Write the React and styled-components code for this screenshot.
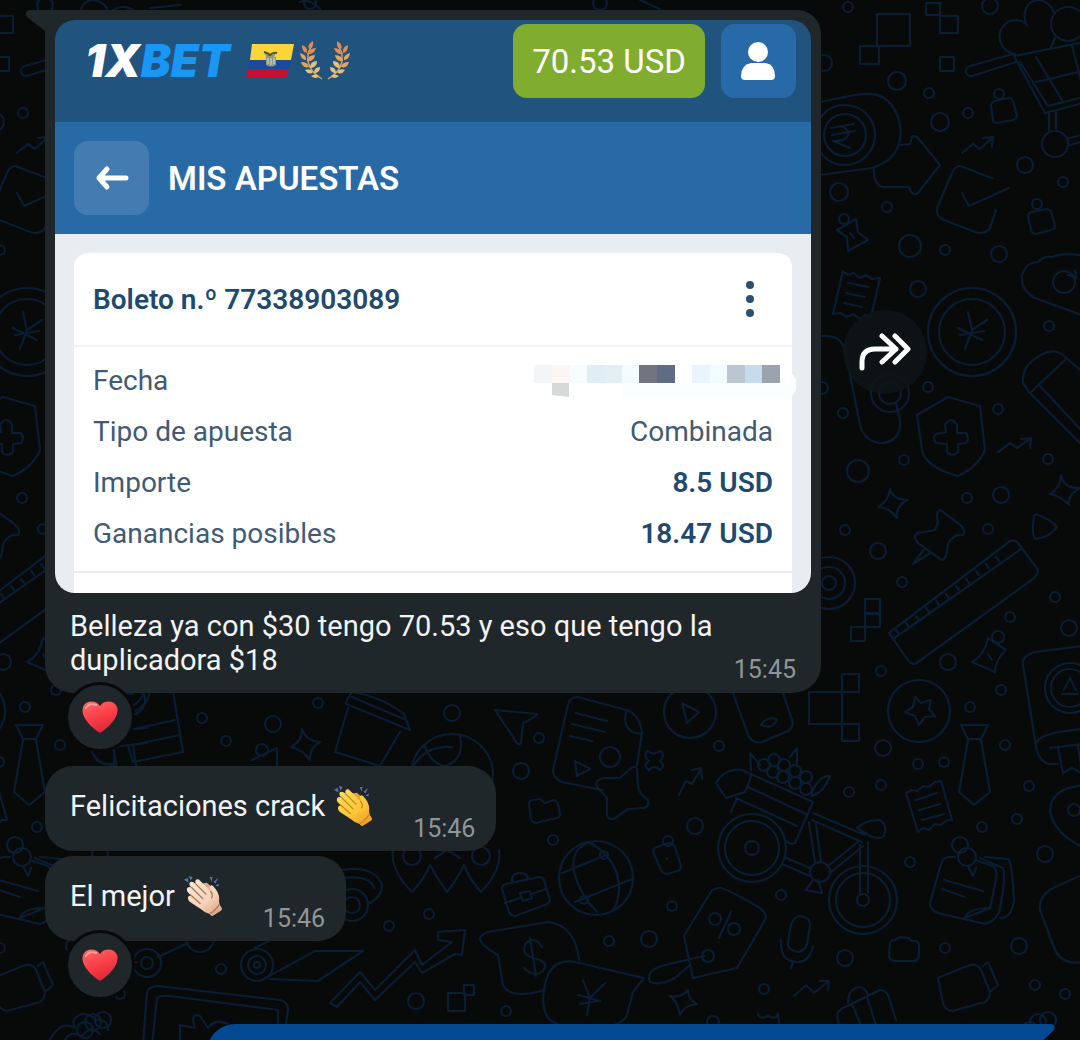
import styled, { createGlobalStyle, css } from "styled-components";

const details = [
  { label: "Fecha", hidden: true },
  { label: "Tipo de apuesta", value: "Combinada" },
  { label: "Importe", value: "8.5 USD", strong: true },
  { label: "Ganancias posibles", value: "18.47 USD", strong: true },
];

// x, width, colour
const mosaic = [
  [0, 18, "#f4f5f6"],
  [18, 18, "#fbf6f1"],
  [36, 17, "#f5fdfe"],
  [53, 18, "#e1edf4"],
  [71, 17, "#e4eff5"],
  [88, 17, "#f4fbfe"],
  [105, 18, "#71757f"],
  [123, 18, "#5f6c84"],
  [158, 18, "#e9f5fd"],
  [176, 17, "#f2fbfd"],
  [193, 18, "#bac7d0"],
  [211, 17, "#c5dcec"],
  [228, 18, "#9ba4ad"],
];

// x, y, radius
const bubbles = [
  [848, 7, 5], [990, 6, 8], [897, 81, 9], [929, 93, 5], [968, 113, 5], [940, 122, 9],
  [1025, 165, 8], [1063, 182, 5], [839, 192, 9], [887, 207, 5], [910, 246, 11], [945, 250, 5],
  [999, 254, 8], [918, 289, 8], [1049, 326, 5], [824, 63, 8], [928, 387, 5], [843, 413, 5],
  [998, 409, 5], [904, 460, 5], [858, 471, 11], [1048, 459, 5], [967, 498, 5], [1001, 495, 8],
  [845, 530, 5], [878, 551, 8], [988, 529, 5], [902, 582, 5], [1055, 597, 5], [1010, 617, 5],
  [1069, 628, 8], [948, 662, 8], [881, 671, 5], [1001, 690, 5], [822, 388, 6], [539, 738, 5],
  [521, 771, 8], [553, 840, 5], [719, 746, 5], [695, 826, 8], [672, 906, 5], [609, 941, 5],
  [649, 939, 8], [764, 989, 5], [506, 1011, 5], [781, 895, 5], [883, 748, 8], [918, 764, 5],
  [944, 762, 5], [970, 707, 5], [1005, 745, 5], [881, 785, 5], [849, 792, 5], [1029, 786, 5],
  [1017, 819, 5], [982, 827, 5], [910, 862, 5], [1045, 854, 8], [1019, 946, 8], [945, 948, 5],
  [845, 958, 8], [1035, 985, 5], [1065, 994, 5], [1074, 810, 6], [202, 718, 5], [273, 724, 8],
  [226, 741, 5], [318, 703, 5], [452, 713, 8], [389, 926, 5], [429, 914, 5], [221, 969, 5],
  [416, 1001, 8], [845, 135, 30], [845, 135, 21], [972, 332, 44], [972, 332, 33],
  [1068, 24, 17], [1055, 144, 13], [999, 94, 5], [1037, 204, 5], [844, 219, 5], [1064, 282, 11],
  [890, 393, 19], [890, 393, 11], [829, 583, 26], [829, 583, 16], [829, 583, 7], [998, 637, 6],
  [919, 711, 31], [1070, 688, 25], [1070, 688, 19], [610, 757, 10], [690, 712, 26],
  [596, 878, 37], [604, 855, 4], [584, 900, 4], [715, 919, 6], [734, 929, 6], [708, 956, 6],
  [752, 848, 34], [752, 848, 27], [752, 848, 7], [863, 900, 34], [863, 900, 27], [863, 900, 6],
  [820, 872, 10], [960, 845, 8], [967, 857, 9], [764, 765, 6], [774, 760, 6], [784, 765, 6],
  [773, 772, 6], [783, 777, 6], [795, 771, 6], [795, 783, 6], [806, 777, 6], [806, 789, 6],
  [352, 905, 16], [352, 905, 8], [257, 965, 16], [257, 965, 9], [257, 965, 3], [147, 963, 14],
  [147, 963, 6], [200, 938, 14], [412, 856, 9], [481, 856, 9], [452, 775, 41], [262, 750, 6],
  [668, 841, 5], [1038, 1022, 8], [1048, 1020, 8], [1030, 1030, 8], [45, 5, 8], [130, 700, 15],
  [310, 3, 6], [600, 3, 7], [713, 1022, 6],
];

const squares = [
  [877, 14, 33, 32], [860, 46, 19, 18], [926, 3, 14, 12], [940, 16, 18, 17], [940, 57, 14, 14],
  [865, 599, 15, 15], [865, 613, 15, 14], [851, 627, 14, 14], [842, 674, 17, 18],
  [809, 692, 33, 32], [842, 724, 17, 17], [448, 993, 17, 18], [464, 985, 10, 10],
];

const doodles = [
  // heart and shopping cart
  "M1015 54C1000 52 996 35 1003 27C1010 16 1025 20 1027 26C1020 10 1030 0 1038 0C1048 1 1053 8 1054 13M1055 38L1051 48",
  "M1013 54L970 66A5 5 0 0 0 972 76L1016 62M1014 56L1045 113L1095 100M1020 62L1048 106L1095 94M1014 56L1085 42M1036 57L1062 100M1036 82L1095 68M1072 46L1082 84",
  "M1049 113V131M1056 112V131M1067 139L1090 132M1067 146L1090 139",
  // padlocks
  "M991 106Q991 102 995 101L1008 98Q1012 98 1013 101L1017 116Q1016 119 1013 120L997 123Q993 123 993 120Z",
  "M1028 217Q1028 213 1032 212L1047 209Q1050 209 1051 212L1055 226Q1055 229 1051 230L1036 234Q1032 234 1031 230Z",
  // banknote, rupee, arrow
  "M820 102C850 96 870 90 882 97C900 107 902 130 900 140C896 160 880 165 872 168L820 175",
  "M831 128L854 124M832 135L855 131M840 126C854 130 850 142 833 141L850 148",
  "M900 145L910 144L912 137Q915 135 918 138L940 165L918 193Q912 197 909 187L882 187Q873 184 874 167",
  "M962 153L973 144L980 149L993 137M983 138L993 137L992 147",
  "M992 178L960 166Q955 166 952 173L937 208Q936 215 942 219L975 232Q985 235 990 228L996 210M962 193L969 206L1009 188",
  "M837 230L856 219L858 232L868 240L848 251L847 237ZM850 233L854 238",
  "M843 271L848 275L854 273L860 278L866 275L872 279L880 278L871 317L865 315L860 319L853 314L847 317L840 313L833 314ZM848 283L868 287M846 293L865 297M844 303L862 307",
  "M968 312L972 330L987 320M972 330L965 349M958 328L982 340M960 335L984 331",
  "M1095 320L1035 298Q1020 290 1022 275Q1026 262 1038 262Q1045 255 1052 257Q1065 252 1085 256M1068 275L1076 278L1075 270",
  "M822 336Q840 334 845 350L860 425Q865 443 883 443Q902 440 900 420L896 403",
  // shield
  "M948 397Q965 402 980 406L985 450Q978 467 958 476Q925 467 922 450L917 415Z",
  "M945 425Q951 415 957 425V433L966 433Q970 439 966 443L958 444V452Q952 458 947 452V444L936 443Q932 438 936 434L946 432Z",
  "M998 452L1010 443L1017 448L1031 438M1021 439L1031 438L1030 448",
  "M1023 383Q1022 370 1030 363Q1050 345 1063 355L1095 383M1023 383L1030 393L1095 458M1030 393L1065 360M1040 386L1095 445",
  "M890 489Q893 500 908 500Q895 506 897 518Q890 508 878 507Q889 501 890 489Z",
  "M1061 475Q1064 489 1080 488Q1067 495 1069 505Q1061 496 1050 494Q1060 489 1061 475Z",
  "M940 510Q935 512 938 522L935 530L918 533Q912 536 918 543L940 559Q945 562 947 552L948 544Q953 534 963 535Q967 530 958 523ZM924 549L913 564L930 553",
  "M1036 514Q1052 520 1057 527Q1050 537 1036 539Q1031 537 1034 516Z",
  // ruler
  "M889 633L1010 541Q1014 539 1018 543L1038 570Q1038 575 1033 579L915 664Q912 665 908 660ZM893 639L1021 549",
  "M899 634L896 630M909 627L906 623M919 620L916 616M929 612L926 608M939 605L936 601M949 598L946 594M959 590L956 586M969 583L966 579M979 575L976 571M989 568L986 564M999 561L996 557",
  "M988 638L1006 650Q995 660 995 672L972 662Q985 655 988 638ZM988 654L992 660",
  "M915 697L921 703L931 700L929 709L935 716L925 717L919 725L915 716L905 712L913 707Z",
  // passport
  "M1092 645L1035 652Q1022 655 1023 665L1035 740Q1037 762 1050 764L1058 764M1037 742Q1040 732 1092 728M1050 748L1092 743M1058 747L1063 773L1072 768L1082 773L1078 745",
  "M1064 690L1070 678L1076 690M1062 694H1078",
  // plane, document, star
  "M495 710L537 714Q535 718 523 723L521 743Q518 747 513 737Z",
  "M602 790L562 782Q553 778 553 770L568 705Q570 697 577 697L627 710Q640 715 642 733L637 765M627 710Q622 725 632 732L641 734",
  "M576 713L607 721M572 724L605 732M570 736L592 741M575 761L590 769L577 776Z",
  "M637 768L638 787Q640 795 648 800Q650 808 642 808L628 809L614 819Q608 820 607 815V798L597 787Q594 780 604 778L620 778L630 769Q635 765 637 768Z",
  "M682 703L699 712L687 723Z",
  "M733 693L748 735Q752 744 762 742L788 731Q794 728 792 720L783 693M761 725Q766 716 777 719Q774 730 761 725Z",
  "M648 751Q654 756 660 751Q666 755 660 761Q666 766 660 770Q654 764 649 770Q642 766 649 761Q642 755 648 751Z",
  "M679 795L686 781L692 784L701 769M692 770L701 768L702 779",
  "M529 804Q529 800 533 800L540 799L545 803L554 800Q558 800 560 814Q560 818 556 818L536 823Q532 823 531 819Z",
  "M562 873L604 856M575 902L632 879M589 842Q570 850 574 872Q580 895 597 912M589 842Q620 860 619 890Q618 905 612 911",
  "M653 852Q653 848 657 847L669 843Q673 843 675 847L681 866Q681 870 677 871L667 874Q663 874 661 870ZM667 858V859",
  "M502 889Q502 885 506 884L539 877Q543 877 544 880L550 900Q549 904 545 905L515 916Q511 916 509 912ZM505 903L520 898M532 894L546 889M520 893L530 891L532 898L523 901ZM512 882Q511 873 520 873Q527 873 528 878",
  "M545 990Q510 1000 503 985L498 955Q480 945 480 938Q482 932 500 930L548 922Q575 925 579 960",
  "M542 947Q535 935 526 943Q520 955 534 958Q550 962 543 971Q534 978 524 968M530 938L536 976",
  "M644 978L575 962Q550 958 545 985Q540 1005 548 1018Q560 1030 585 1026Q620 1030 627 1015L633 992Z",
  "M583 980L590 998L605 983M590 998L587 1015M578 995L600 1001M580 1004L598 1001",
  "M718 888Q722 886 760 908Q768 914 765 920L737 968L693 978L684 936L712 890ZM731 912L719 938M704 956L665 965Q645 970 650 982Q660 986 675 978L690 965",
  "M688 990Q688 1000 697 1004Q684 1005 680 1015Q678 1002 670 996Q682 998 688 990Z",
  // bicycle
  "M786 858L810 868M784 865L810 876M813 813L865 835M812 820L862 842M809 822L815 862M816 824L821 862M828 866L858 842M830 873L863 846M860 845V893M868 842V893",
  "M857 828Q865 820 880 820Q888 825 884 836Q880 840 870 836ZM813 880L806 890L822 893L818 880",
  "M716 783Q725 768 742 770L813 802L795 843Q790 845 785 840M716 783L726 798L745 792L752 774M748 787L806 814M736 798L797 826M737 798L731 812M751 770L750 753L760 765M790 757L797 748V764M812 792Q820 775 830 776Q824 792 812 796Z",
  "M961 725H988L981 739H968ZM968 740L959 792L974 805L990 792L981 740",
  "M906 793L912 790L917 791L923 786L929 787L935 782L941 781L952 820L947 820L941 825L935 824L929 830L923 828L918 832ZM916 800L937 793M919 810L940 804M922 820L944 814",
  "M1092 785Q1050 785 1050 812Q1055 835 1085 848",
  "M955 857H948Q943 858 941 864L930 903Q930 910 938 913L985 924Q998 920 1000 908M975 860L993 866Q998 870 996 880L990 908L965 918Q968 908 990 908M980 858L1003 868Q1006 880 1000 908M985 857L1008 859Q1012 862 1014 900Q1012 918 1000 918",
  "M944 880L983 891M942 889L965 897M968 866L973 876L976 868",
  "M1092 870L1060 885Q1038 893 1040 910L1055 950Q1062 965 1082 962",
  "M938 978L970 965Q978 963 981 970L990 992Q990 998 985 1002L952 1011Q945 1010 943 1003ZM983 966L988 962L998 985L990 992",
  "M791 925Q794 916 801 916Q811 918 810 926L807 944Q804 952 797 952Q787 950 788 942ZM781 940Q780 962 797 962Q810 962 813 946M793 962L791 968",
  "M890 944Q890 940 895 940L900 937L908 938L912 941Q919 940 919 946V955Q918 961 913 961H895Q889 960 889 955Z",
  "M794 996L806 985L814 993L829 981M820 981H829L828 990",
  "M840 1030L837 1015Q838 1010 845 1007L880 990Q887 990 889 998L896 1020M852 1004L862 1028M867 997L877 1028M848 1003Q848 990 858 987Q866 987 868 996",
  // lower left
  "M348 708L335 752L380 766L400 732M347 700L352 692Q380 696 404 714L410 730L346 704ZM352 697L406 720",
  "M424 745Q432 765 445 766Q465 760 460 736M412 768Q425 745 452 747",
  "M173 692L183 752L133 762L128 745M130 730L175 720M132 745L180 735M92 752Q98 765 114 765V745",
  "M302 729Q306 741 320 742Q309 748 310 760Q303 750 291 747Q302 742 302 729ZM252 760L277 748V766",
  "M393 850Q390 870 412 892Q425 878 430 865Q438 880 447 892Q458 878 464 865Q470 880 481 892Q502 870 499 850M435 858L447 850L460 858",
  "M342 870Q375 865 382 885Q383 895 370 903M343 878Q370 875 374 888",
  "M270 979L318 981L363 951H315L262 980M255 948L275 938M158 957L188 943",
  "M330 1003L360 972L375 990L415 950L422 965L452 942L438 940V932L465 930L462 955L455 954L422 973L415 962L375 1000L360 982L337 1007Z",
  "M143 1045L147 992Q150 986 158 986L280 1000Q288 1002 288 1010L285 1030M152 1045L157 998Q160 995 170 996L278 1010V1030M180 1045V1025L195 1028Q190 1012 200 1016L208 1028Q215 1018 228 1024",
  "M50 1040Q60 1020 75 1028Q70 1018 82 1014Q92 1014 95 1020Q108 1018 108 1030M65 1040Q70 1030 82 1036Q90 1025 100 1034",
  "M150 8L180 5M300 2Q310 -2 320 9M640 0L660 9",
  "M758 1014Q760 1020 768 1016Q776 1020 778 1014L780 1030",
];

const Doodles = () => (
  <>
    {bubbles.map(([x, y, r], i) => (
      <circle key={i} cx={x} cy={y} r={r} />
    ))}
    {squares.map(([x, y, w, h], i) => (
      <rect key={i} x={x} y={y} width={w} height={h} />
    ))}
    {doodles.map((d, i) => (
      <path key={i} d={d} />
    ))}
  </>
);

// the wallpaper repeats every 945px
const Wallpaper = () => (
  <WallpaperSvg
    viewBox="0 0 1080 1040"
    preserveAspectRatio="xMinYMin slice"
    aria-hidden="true"
  >
    <g fill="none" stroke="#0a1d32" strokeWidth="2.2" strokeLinejoin="round" strokeLinecap="round">
      <Doodles />
      <g transform="translate(-945 0)">
        <Doodles />
      </g>
    </g>
  </WallpaperSvg>
);

const Flag = () => (
  <svg width="48" height="34" viewBox="0 0 48 34" role="img" aria-label="Ecuador">
    <path d="M6 0H48L45 16H4Z" fill="#fbd536" />
    <path d="M4 16H45L43 25H2Z" fill="#1b4a9c" />
    <path d="M2 25H43L40 34H0Z" fill="#c8102e" />
    <path d="M19 9Q24 12 30 9L28 13H30V21Q25 24 20 21V13Z" fill="#8f9a86" />
    <path d="M18 8Q22 9 24 11Q27 8 31 9" fill="none" stroke="#4f5238" strokeWidth="2" />
    <path d="M22 14V20M25 14V21M28 14V20" stroke="#d8ddd0" strokeWidth="1" />
  </svg>
);

const Branch = () => (
  <>
    <path d="M11 6C6 14 5 28 22 38" fill="none" stroke="#d9a66a" strokeWidth="1.4" />
    <path d="M13 0Q7 3 9 8Q14 7 13 0ZM2 4Q2 11 7 12Q8 6 2 4ZM16 7Q9 7 7 13Q14 14 16 7Z" fill="#e8894a" />
    <path d="M0 12Q1 19 6 19Q7 14 0 12ZM15 14Q8 14 7 20Q14 21 15 14ZM1 21Q3 28 9 26Q8 21 1 21Z" fill="#e6a55a" />
    <path d="M17 20Q10 20 10 27Q17 27 17 20ZM5 29Q9 35 13 31Q11 27 5 29ZM20 26Q14 26 14 32Q20 32 20 26ZM11 35Q16 39 19 35Q16 32 11 35Z" fill="#e9c07a" />
  </>
);

const Laurel = () => (
  <svg width="50" height="40" viewBox="0 0 50 40" aria-hidden="true">
    <Branch />
    <g transform="translate(50 0) scale(-1 1)">
      <Branch />
    </g>
  </svg>
);

const UserIcon = () => (
  <svg width="35" height="40" viewBox="0 0 35 40" fill="#fff" aria-hidden="true">
    <circle cx="17" cy="11" r="10" />
    <path d="M10 22H25Q34 24 34 35Q34 39 30 39H4Q0 39 0 35Q0 24 10 22Z" />
  </svg>
);

const BackIcon = () => (
  <svg width="34" height="26" viewBox="0 0 34 26" aria-hidden="true">
    <path d="M31 13H4M12 4L4 13L12 22" fill="none" stroke="#fff" strokeWidth="5" strokeLinecap="round" strokeLinejoin="round" />
  </svg>
);

const DotsIcon = () => (
  <svg width="10" height="36" viewBox="0 0 10 36" fill="#2c5071" aria-hidden="true">
    <circle cx="5" cy="4" r="4" />
    <circle cx="5" cy="18" r="4" />
    <circle cx="5" cy="32" r="4" />
  </svg>
);

const ForwardIcon = () => (
  <svg width="52" height="38" viewBox="0 0 52 38" aria-hidden="true">
    <path
      d="M3 35V29Q3 16 16 16H37M23 3L37 16L23 29M36 3L49 16L36 29"
      fill="none"
      stroke="#fff"
      strokeWidth="5"
      strokeLinecap="round"
      strokeLinejoin="round"
    />
  </svg>
);

const Heart = () => (
  <svg width="36" height="33" viewBox="0 0 36 33" role="img" aria-label="❤">
    <defs>
      <linearGradient id="heart" x1="0" y1="0" x2="0.4" y2="1">
        <stop offset="0" stopColor="#ff6a68" />
        <stop offset="0.55" stopColor="#fb3f48" />
        <stop offset="1" stopColor="#e0283a" />
      </linearGradient>
    </defs>
    <path d="M18 5C14-1 4-1 1 6C-2 16 9 26 18 32C27 26 38 16 35 6C32-1 22-1 18 5Z" fill="url(#heart)" />
    <path d="M4 7Q8 1 14 4" fill="none" stroke="#ff9d97" strokeWidth="2" strokeLinecap="round" />
  </svg>
);

const Clap = ({ id, light, base, shade, line }) => (
  <ClapSvg viewBox="0 0 40 42" role="img" aria-label="👏">
    <defs>
      <linearGradient id={id} gradientUnits="userSpaceOnUse" x1="8" y1="8" x2="32" y2="40">
        <stop offset="0" stopColor={light} />
        <stop offset="0.6" stopColor={base} />
        <stop offset="1" stopColor={shade} />
      </linearGradient>
    </defs>
    <path d="M0 4L5 7L4 2ZM5 0L7 5L9 1ZM27 1L29 6L30 1ZM31 6L36 2L33 8ZM33 10L37 8L36 11Z" fill="#5873ad" />
    <path d="M19 8L24 7L31 13L28 18L20 11Z" fill={shade} />
    <path
      d="M12 5Q14 2 17 5L28 16L27 12Q28 8 31 11Q37 17 37 24Q36 29 40 34Q40 36 38 37L30 42Q28 42 27 40Q22 39 18 35L6 27Q3 24 5 21Q7 20 9 22L4 17Q2 14 4 12Q6 11 9 13L6 10Q5 6 8 6Q10 6 12 8Z"
      fill={`url(#${id})`}
    />
    <path
      d="M12 8L23 19M8 12L20 24M7 20L17 29M28 16Q31 20 29 23M37 30Q32 37 28 39"
      fill="none"
      stroke={line}
      strokeWidth="1.4"
      strokeLinecap="round"
    />
  </ClapSvg>
);

const Redacted = () => (
  <RedactedSvg width="262" height="36" viewBox="0 0 262 36" role="img" aria-label="Fecha oculta">
    <path d="M88 18H257V7L262 14V25L257 33H88Z" fill="#fbfefe" />
    {mosaic.map(([x, w, fill]) => (
      <rect key={x} x={x} y="0" width={w} height="18" fill={fill} />
    ))}
    <path d="M18 18H35V32L18 30Z" fill="#d5dad9" />
  </RedactedSvg>
);

const BetSlip = () => (
  <Slip>
    <Topbar>
      <Logo>
        1X<span>BET</span>
      </Logo>
      <Badges>
        <Flag />
        <Laurel />
      </Badges>
      <Balance type="button">70.53 USD</Balance>
      <SquareButton type="button" aria-label="Perfil" $color="#286aa8">
        <UserIcon />
      </SquareButton>
    </Topbar>
    <TitleBar>
      <SquareButton type="button" aria-label="Volver" $color="#437cb0">
        <BackIcon />
      </SquareButton>
      <h1>MIS APUESTAS</h1>
    </TitleBar>
    <SlipBody>
      <Card>
        <CardHeader>
          <h2>Boleto n.º 77338903089</h2>
          <MenuButton type="button" aria-label="Opciones">
            <DotsIcon />
          </MenuButton>
        </CardHeader>
        <Details>
          {details.map(({ label, value, strong, hidden }) => (
            <DetailRow key={label}>
              <dt>{label}</dt>
              <DetailValue $strong={strong}>{hidden ? <Redacted /> : value}</DetailValue>
            </DetailRow>
          ))}
        </Details>
        <NextSection />
      </Card>
    </SlipBody>
  </Slip>
);

const App = () => (
  <>
    <GlobalStyle />
    <Chat>
      <Wallpaper />
      <Messages>
        <MessageRow>
          <PhotoBubble>
            <Tail width="24" height="24" viewBox="0 0 24 24" aria-hidden="true">
              <path d="M4 0H24V24L2 7Q-1 2 4 0Z" fill="#20272a" />
            </Tail>
            <BetSlip />
            <Caption>
              <p>Belleza ya con $30 tengo 70.53 y eso que tengo la duplicadora $18</p>
              <Time>15:45</Time>
            </Caption>
          </PhotoBubble>
          <ForwardButton type="button" aria-label="Reenviar">
            <ForwardIcon />
          </ForwardButton>
        </MessageRow>
        <Reaction type="button">
          <Heart />
        </Reaction>
        <TextBubble>
          <p>
            Felicitaciones crack{" "}
            <Clap id="clap-yellow" light="#ffdc5c" base="#fdc637" shade="#ef9f2c" line="#c98a1b" />
          </p>
          <Time>15:46</Time>
        </TextBubble>
        <TextBubble>
          <p>
            El mejor{" "}
            <Clap id="clap-light" light="#fbe3cf" base="#f7d3bb" shade="#e0a98d" line="#a9785f" />
          </p>
          <Time>15:46</Time>
        </TextBubble>
        <Reaction type="button">
          <Heart />
        </Reaction>
        <SentRow>
          <SentBubble />
          <svg width="20" height="24" viewBox="0 0 20 24" aria-hidden="true">
            <path d="M0 0H17Q21 2 19 6L0 24Z" fill="#034992" />
          </svg>
        </SentRow>
      </Messages>
    </Chat>
  </>
);

export default App;

const GlobalStyle = createGlobalStyle`
  *,
  *::before,
  *::after {
    box-sizing: border-box;
  }

  body {
    margin: 0;
    background-color: #080909;
    font-family: Roboto, sans-serif;
  }

  h1, h2, p, dl, dt, dd {
    margin: 0;
  }

  button {
    padding: 0;
    border: none;
    font-family: inherit;
    cursor: pointer;
  }

  svg {
    display: block;
    flex-shrink: 0;
  }
`;

const Chat = styled.main`
  position: relative;
  height: 100vh;
  overflow: hidden;
`;

const WallpaperSvg = styled.svg`
  position: absolute;
  inset: 0;
  width: 100%;
  height: 100%;
`;

const Messages = styled.div`
  position: relative;
  display: flex;
  flex-direction: column;
  align-items: flex-start;
  padding: 10px 25px 0 45px;
`;

const MessageRow = styled.div`
  display: flex;
  align-items: center;
  gap: 22px;
  max-width: 100%;
`;

const PhotoBubble = styled.article`
  position: relative;
  flex: 0 1 776px;
  padding: 10px;
  padding-bottom: 0;
  background-color: #20272a;
  border-radius: 0 24px 28px 28px;
`;

const Tail = styled.svg`
  position: absolute;
  top: 0;
  left: -20px;
`;

const Slip = styled.section`
  position: relative;
  overflow: hidden;
  border-radius: 20px;
`;

const Topbar = styled.header`
  display: flex;
  align-items: center;
  padding: 4px 15px 24px 30px;
  background-color: #20547f;
`;

const Logo = styled.span`
  color: #fff;
  font-family: Inter, sans-serif;
  font-size: 45px;
  font-style: italic;
  font-weight: 900;
  line-height: 48px;

  & > span {
    color: #1a97f5;
  }
`;

const Badges = styled.div`
  display: flex;
  align-items: center;
  gap: 6px;
  margin: 0 auto 0 16px;
`;

const Balance = styled.button`
  height: 74px;
  padding: 0 19px;
  margin-right: 16px;
  background-color: #80ad2f;
  border-radius: 14px;
  color: #fff;
  font-size: 33px;
`;

const SquareButton = styled.button`
  display: flex;
  align-items: center;
  justify-content: center;
  width: 75px;
  height: 74px;
  background-color: ${(props) => props.$color};
  border-radius: 14px;
`;

const TitleBar = styled.div`
  display: flex;
  align-items: center;
  gap: 19px;
  padding: 19px;
  background-color: #286aa6;

  & > h1 {
    color: #fff;
    font-size: 33px;
    font-weight: 600;
  }
`;

const SlipBody = styled.div`
  padding: 19px 19px 0;
  background-color: #e8edf1;
`;

const Card = styled.div`
  background-color: #fff;
  border-radius: 14px 14px 0 0;
`;

const CardHeader = styled.div`
  display: flex;
  align-items: center;
  justify-content: space-between;
  height: 94px;
  padding: 0 19px;
  border-bottom: 2px solid #f1f4f6;

  & > h2 {
    color: #1f4a70;
    font-size: 28px;
    font-weight: 600;
  }
`;

const MenuButton = styled.button`
  display: flex;
  justify-content: center;
  width: 46px;
  background: none;
`;

const Details = styled.dl`
  padding: 8px 19px 12px;
  border-bottom: 2px solid #e9edf0;
`;

const DetailRow = styled.div`
  display: flex;
  align-items: center;
  justify-content: space-between;
  height: 51px;
  color: #405b73;
  font-size: 28px;
`;

const DetailValue = styled.dd`
  ${(props) =>
    props.$strong &&
    css`
      color: #1f4a70;
      font-weight: 600;
    `}
`;

const RedactedSvg = styled.svg`
  margin: 4px -23px 0 0;
`;

const NextSection = styled.div`
  height: 20px;
`;

const Caption = styled.div`
  display: flex;
  align-items: flex-end;
  gap: 8px;
  padding: 16px 15px 8px;

  & > p {
    flex: 1;
    padding-bottom: 8px;
    color: #f1f3f4;
    font-size: 29px;
    line-height: 34px;
  }
`;

const Time = styled.time`
  color: #8f9598;
  font-size: 25px;
  line-height: 30px;
`;

const ForwardButton = styled.button`
  display: flex;
  align-items: center;
  justify-content: center;
  flex-shrink: 0;
  width: 84px;
  height: 84px;
  background-color: #0e1517e6;
  border-radius: 50%;
`;

const Reaction = styled.button`
  z-index: 1;
  display: flex;
  align-items: center;
  justify-content: center;
  width: 70px;
  height: 70px;
  margin: -11px 0 14px 20px;
  background-color: #20272a;
  border: 3px solid #080909;
  border-radius: 50%;
`;

const TextBubble = styled.article`
  display: flex;
  align-items: flex-end;
  gap: 40px;
  padding: 20px 21px 7px 25px;
  background-color: #20272a;
  border-radius: 28px;

  & + & {
    margin-top: 5px;
  }

  & > p {
    display: flex;
    align-items: center;
    gap: 8px;
    padding-bottom: 18px;
    color: #f1f3f4;
    font-size: 29px;
    line-height: 40px;
  }
`;

const ClapSvg = styled.svg`
  width: 40px;
  height: 40px;
`;

const SentRow = styled.div`
  display: flex;
  align-self: flex-end;
  width: 84%;
  margin-top: 10px;
`;

const SentBubble = styled.article`
  flex: 1;
  height: 120px;
  background-color: #034992;
  border-radius: 28px 0 28px 28px;
`;
